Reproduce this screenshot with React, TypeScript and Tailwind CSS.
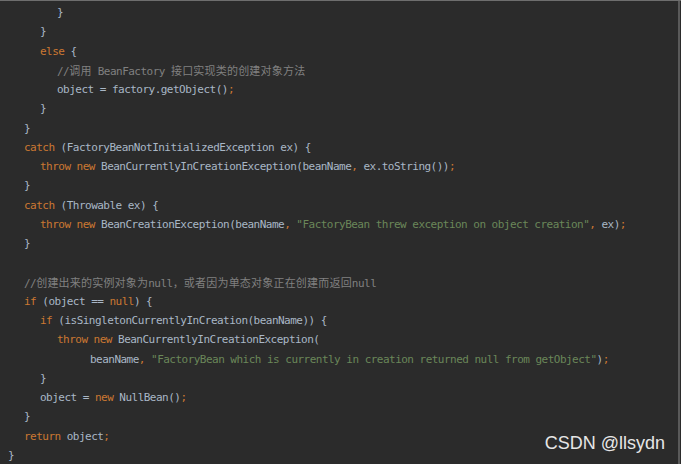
type Tok = [string, string];

const K = "text-[#cc7832]";
const T = "text-[#a9b7c6]";
const S = "text-[#6a8759]";
const C = "text-[#808080]";
const Z = "text-[#808080] font-['Noto_Sans_CJK_SC',sans-serif] text-[11px] tracking-[0.2px]";

const indent = ["pl-[8px]", "pl-[24px]", "pl-[40px]", "pl-[57px]", "pl-[73px]", "pl-[90px]"];

const lines: [number, Tok[]][] = [
  [3, [[T, "}"]]],
  [2, [[T, "}"]]],
  [2, [[K, "else"], [T, " {"]]],
  [3, [[C, "//"], [Z, "调用"], [C, " BeanFactory "], [Z, "接口实现类的创建对象方法"]]],
  [3, [[T, "object = factory.getObject()"], [K, ";"]]],
  [2, [[T, "}"]]],
  [1, [[T, "}"]]],
  [1, [[K, "catch"], [T, " (FactoryBeanNotInitializedException ex) {"]]],
  [2, [[K, "throw new"], [T, " BeanCurrentlyInCreationException(beanName"], [K, ","], [T, " ex.toString())"], [K, ";"]]],
  [1, [[T, "}"]]],
  [1, [[K, "catch"], [T, " (Throwable ex) {"]]],
  [2, [[K, "throw new"], [T, " BeanCreationException(beanName"], [K, ","], [S, " \"FactoryBean threw exception on object creation\""], [K, ","], [T, " ex)"], [K, ";"]]],
  [1, [[T, "}"]]],
  [0, []],
  [1, [[C, "//"], [Z, "创建出来的实例对象为"], [C, "null"], [Z, "，或者因为单态对象正在创建而返回"], [C, "null"]]],
  [1, [[K, "if"], [T, " (object == "], [K, "null"], [T, ") {"]]],
  [2, [[K, "if"], [T, " (isSingletonCurrentlyInCreation(beanName)) {"]]],
  [3, [[K, "throw new"], [T, " BeanCurrentlyInCreationException("]]],
  [5, [[T, "beanName"], [K, ","], [S, " \"FactoryBean which is currently in creation returned null from getObject\""], [T, ")"], [K, ";"]]],
  [2, [[T, "}"]]],
  [2, [[T, "object = "], [K, "new"], [T, " NullBean()"], [K, ";"]]],
  [1, [[T, "}"]]],
  [1, [[K, "return"], [T, " object"], [K, ";"]]],
  [0, [[T, "}"]]],
];

export default function App() {
  return (
    <div className="relative w-[681px] h-[464px] overflow-hidden bg-[#2b2b2b] border-t border-[#6e6e6e] flex">
      <div className="flex-1 pt-[2px] font-['DejaVu_Sans_Mono','Noto_Sans_CJK_SC',monospace] text-[11px] tracking-[-0.52px] leading-[19.26px] whitespace-pre">
        {lines.map(([lvl, toks], i) => (
          <div key={i} className={`h-[19.26px] ${indent[lvl]}`}>
            {toks.map(([cls, txt], j) => (
              <span key={j} className={cls}>
                {txt}
              </span>
            ))}
          </div>
        ))}
      </div>
      <div className="w-[2px] bg-[#5a5a5a]" />
      <div className="w-[1px] bg-[#2b2b2b]" />
      <div className="absolute right-[16px] bottom-[12px] font-['Liberation_Sans',Arial,sans-serif] text-[18px] leading-none text-[#e6e6e6]">
        CSDN @llsydn
      </div>
    </div>
  );
}
